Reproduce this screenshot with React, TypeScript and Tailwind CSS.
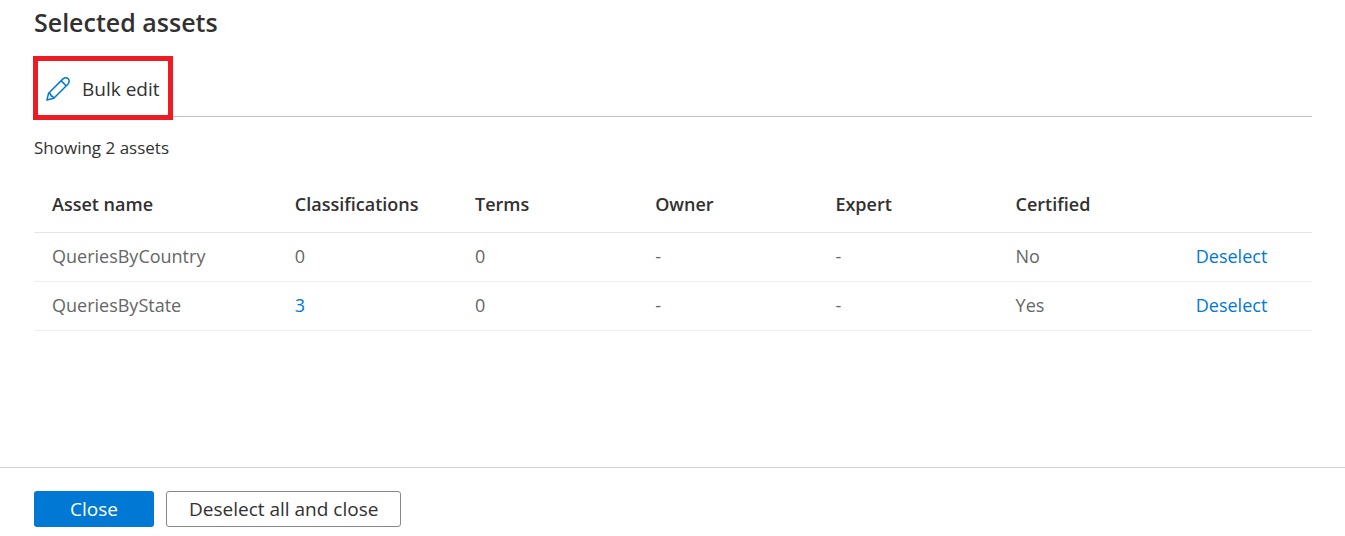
type Asset = {
  name: string;
  classifications: number;
  terms: number;
  owner: string;
  expert: string;
  certified: string;
};

const assets: Asset[] = [
  { name: "QueriesByCountry", classifications: 0, terms: 0, owner: "-", expert: "-", certified: "No" },
  { name: "QueriesByState", classifications: 3, terms: 0, owner: "-", expert: "-", certified: "Yes" },
];

const columns = ["Asset name", "Classifications", "Terms", "Owner", "Expert", "Certified"];

function PencilIcon() {
  return (
    <svg
      aria-hidden="true"
      viewBox="0 0 24 24"
      className="size-6 shrink-0"
      fill="none"
      stroke="#0078d4"
      strokeWidth="1.5"
      strokeLinejoin="round"
    >
      <path d="M.9 23.1 2.6 16.2 17 1.9Q19.8 -.3 22.2 1.8 24.2 4.3 22.1 7L7.8 21.3Z" />
      <path d="m15.1 3.8 5.1 5.1M2.6 16.2Q4.9 16.5 5.1 18.9 7.5 19.1 7.8 21.3" />
    </svg>
  );
}

function AssetTable() {
  return (
    <table className="w-full table-fixed border-collapse text-left text-lg leading-6 text-[#666]">
      <colgroup>
        <col className="w-[19%]" />
        <col className="w-[14.1%]" />
        <col className="w-[14.1%]" />
        <col className="w-[14.1%]" />
        <col className="w-[14.1%]" />
        <col className="w-[14.1%]" />
        <col />
      </colgroup>
      <thead>
        <tr className="h-14 border-b border-[#e5e5e5] text-[#323130]">
          {columns.map((label) => (
            <th key={label} scope="col" className="pl-[18px] font-semibold">
              {label}
            </th>
          ))}
          <td />
        </tr>
      </thead>
      <tbody>
        {assets.map((asset) => (
          <tr key={asset.name} className="h-[49px] border-b border-[#eeeeee] *:pb-0.5 *:pl-[18px]">
            <td>{asset.name}</td>
            <td>
              {asset.classifications > 0 ? (
                <a href="#classifications" className="text-[#0078d4]">
                  {asset.classifications}
                </a>
              ) : (
                asset.classifications
              )}
            </td>
            <td>{asset.terms}</td>
            <td>{asset.owner}</td>
            <td>{asset.expert}</td>
            <td>{asset.certified}</td>
            <td>
              <button type="button" className="text-[#0078d4]">
                Deselect
              </button>
            </td>
          </tr>
        ))}
      </tbody>
    </table>
  );
}

export default function App() {
  return (
    <div className="flex min-h-screen flex-col bg-white font-['Segoe_UI','Open_Sans','Noto_Sans',sans-serif] text-[#323130]">
      <main className="flex-1 pt-1.5 pr-[33px] pb-8 pl-[34px]">
        <h1 className="text-[25px] leading-8 font-semibold">Selected assets</h1>
        <div className="mt-[18px] flex border-b border-[#c0c0c0]">
          <button
            type="button"
            className="-mb-1 -ml-px flex h-16 items-center gap-3 border-5 border-[#ed1c24] px-2 pt-0.5 text-[19px] leading-6 whitespace-nowrap"
          >
            <PencilIcon />
            Bulk edit
          </button>
        </div>
        <p className="mt-[19px] text-[17px] leading-6">Showing 2 assets</p>
        <div className="mt-4">
          <AssetTable />
        </div>
      </main>
      <footer className="flex gap-3 border-t border-[#d2d2d2] px-[34px] pt-[23px] pb-[9px] text-[19px] leading-6">
        <button type="button" className="h-9 w-30 rounded-[3px] bg-[#0078d4] text-white">
          Close
        </button>
        <button type="button" className="h-9 rounded-[3px] border border-[#8a8886] px-[22px] whitespace-nowrap">
          Deselect all and close
        </button>
      </footer>
    </div>
  );
}
